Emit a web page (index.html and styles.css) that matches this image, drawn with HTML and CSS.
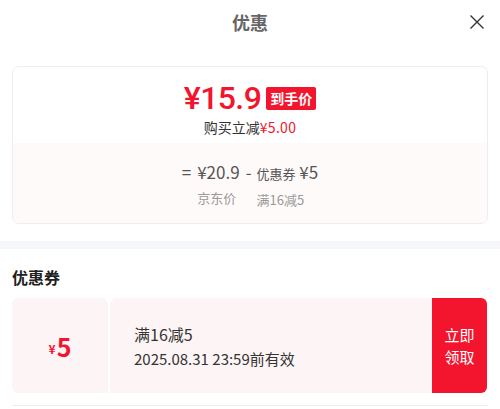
FILE: index.html
```html
<!DOCTYPE html>
<html lang="zh-CN">
<head>
    <meta charset="UTF-8" />
    <title>优惠</title>
    <meta name="viewport" content="width=device-width, initial-scale=1.0" />
    <link rel="stylesheet" href="styles.css">
</head>
<body>
    <div class="header">
        <h1>优惠</h1>
        <span class="close">
            <svg width="16" height="16" viewBox="0 0 16 16"><path d="M1.5 1.5 L14.5 14.5 M14.5 1.5 L1.5 14.5" stroke="#333" stroke-width="1.4" fill="none"/></svg>
        </span>
    </div>

    <div class="price-card">
        <div class="price-top">
            <div class="final-row">
                <span class="final-price">¥15.9</span>
                <span class="tag">到手价</span>
            </div>
            <div class="save">购买立减<span class="red">¥5.00</span></div>
        </div>
        <div class="price-calc">
            <span class="op">=</span>
            <div class="calc-item">
                <div class="calc-value">¥20.9</div>
                <div class="calc-label">京东价</div>
            </div>
            <span class="op minus">-</span>
            <div class="calc-item">
                <div class="calc-value"><small>优惠券</small> ¥5</div>
                <div class="calc-label">满16减5</div>
            </div>
        </div>
    </div>

    <div class="divider"></div>

    <h2 class="section-title">优惠券</h2>

    <div class="coupon">
        <div class="coupon-amount"><small>¥</small>5</div>
        <div class="coupon-info">
            <div class="coupon-rule">满16减5</div>
            <div class="coupon-date">2025.08.31 23:59前有效</div>
        </div>
        <button class="coupon-btn">立即<br>领取</button>
    </div>
    <div class="coupon-next"></div>
</body>
</html>
```

FILE: styles.css
```css
:root {
    --red: #f2152d;
    --text-color: #333;
    --gray: #999;
    --pink-bg: #fdf4f5;
}

body {
    margin: 0;
    font-family: "Noto Sans CJK SC", "Noto Sans", sans-serif;
    color: var(--text-color);
    background: #fff;
    width: 500px;
    overflow: hidden;
}

.header {
    height: 44px;
    display: flex;
    justify-content: center;
    align-items: center;
    position: relative;
}

.header h1 {
    margin: 0;
    font-size: 18px;
    font-weight: 700;
    color: #666;
}

.close {
    position: absolute;
    right: 15px;
    top: 14px;
    display: flex;
}

.price-card {
    margin: 22px 12px 0;
    border: 1px solid #eee;
    border-radius: 7px;
    overflow: hidden;
}

.price-top {
    height: 76px;
    display: flex;
    flex-direction: column;
    align-items: center;
    padding-top: 13px;
    box-sizing: border-box;
}

.final-row {
    display: flex;
    align-items: center;
    gap: 5px;
    height: 36px;
}

.final-price {
    color: var(--red);
    font-family: Roboto, "Noto Sans CJK SC", sans-serif;
    font-size: 32px;
    font-weight: 500;
    letter-spacing: -0.6px;
    line-height: 36px;
}

.tag {
    background: var(--red);
    color: #fff;
    font-size: 14px;
    font-weight: 700;
    line-height: 23px;
    padding: 0 4px;
    border-radius: 2px;
    margin-top: 1px;
}

.save {
    font-size: 14px;
    line-height: 20px;
    margin-top: 1px;
}

.red {
    color: var(--red);
    letter-spacing: 0.3px;
}

.price-calc {
    height: 80px;
    background: #fffafa;
    display: flex;
    justify-content: center;
    align-items: flex-start;
    padding-top: 17px;
    box-sizing: border-box;
    color: #555;
}

.op {
    font-size: 17px;
    line-height: 24px;
    margin: 0 6px 0 0;
}

.minus {
    margin: 0 5px 0 6px;
}

.calc-value {
    font-size: 17px;
    line-height: 24px;
    white-space: nowrap;
}

.calc-value small {
    font-size: 13px;
}

.calc-label {
    font-size: 13px;
    line-height: 18px;
    margin-top: 5px;
    color: var(--gray);
}

.divider {
    height: 8px;
    background: #f6f7fb;
    margin-top: 17px;
}

.section-title {
    margin: 17px 12px 0;
    font-size: 16px;
    font-weight: 700;
    line-height: 22px;
    color: #222;
}

.coupon {
    margin: 10px 13px 0 12px;
    height: 95px;
    display: flex;
}

.coupon-amount {
    width: 96px;
    background: var(--pink-bg);
    border-radius: 6px 0 0 6px;
    color: var(--red);
    font-size: 25px;
    font-weight: 700;
    display: flex;
    justify-content: center;
    align-items: center;
    position: relative;
}

.coupon-amount small {
    font-size: 12px;
    margin: 5px 1px 0 0;
}

.coupon-amount::after,
.coupon-info::before {
    content: "";
    position: absolute;
    top: -4px;
    width: 8px;
    height: 8px;
    border-radius: 50%;
    background: #fff;
}

.coupon-amount::after {
    right: -5px;
}

.coupon-info::before {
    left: -5px;
}

.coupon-info {
    flex: 1;
    margin-left: 2px;
    background: var(--pink-bg);
    padding: 24px 0 0 24px;
    box-sizing: border-box;
    position: relative;
}

.coupon-rule {
    font-size: 16px;
    line-height: 24px;
}

.coupon-date {
    font-size: 15px;
    line-height: 22px;
    margin-top: 2px;
}

.coupon-btn {
    width: 55px;
    border: none;
    background: var(--red);
    color: #fff;
    font-family: inherit;
    font-size: 15px;
    line-height: 22px;
    padding: 0;
    border-radius: 0 6px 6px 0;
}

.coupon-next {
    margin: 12px 12px 0;
    border-top: 1px solid #eee;
}
```
